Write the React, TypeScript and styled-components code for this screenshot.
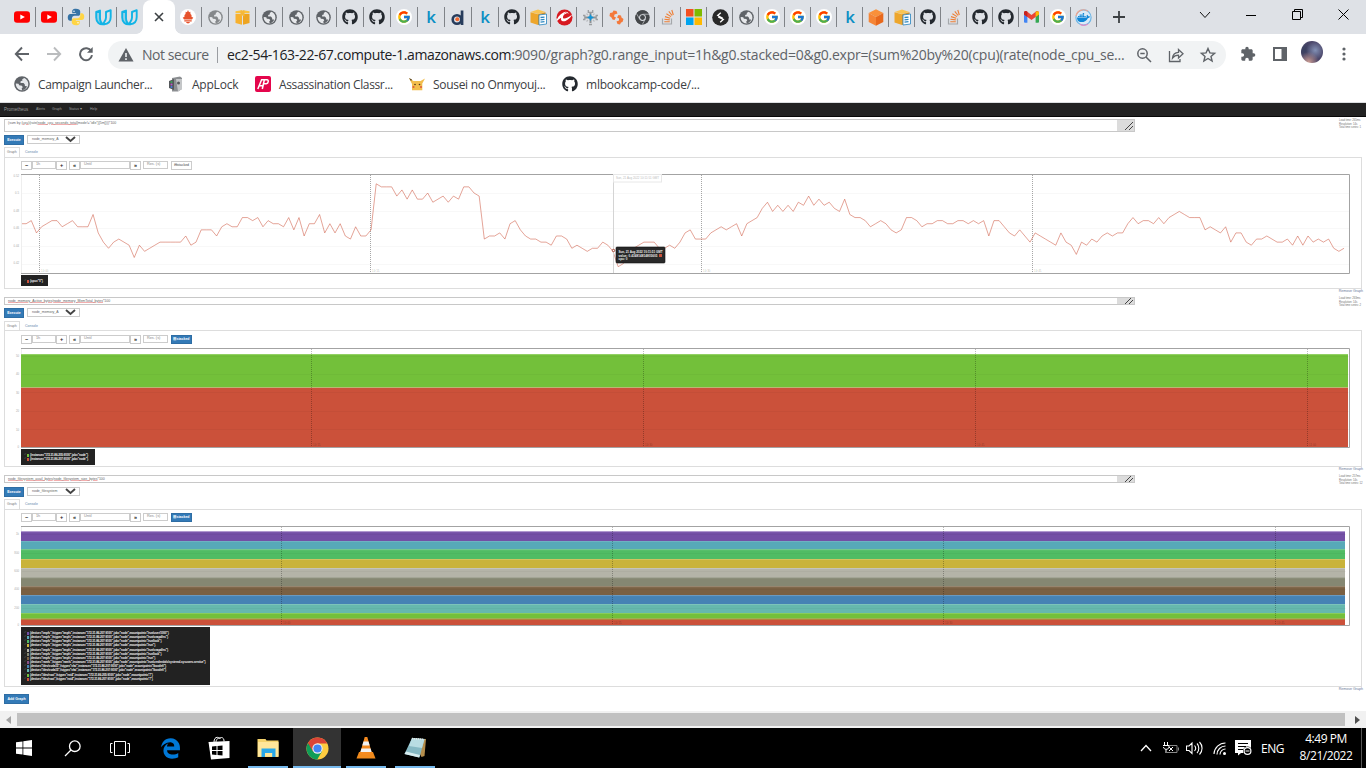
import React from "react";
import styled, { createGlobalStyle } from "styled-components";
import { FaGithub, FaDocker } from "react-icons/fa";
import { FaEdgeLegacy } from "react-icons/fa6";
import { FcGoogle } from "react-icons/fc";

const Global = createGlobalStyle`
  *, *::before, *::after { box-sizing: border-box; }
  body { margin: 0; background: #fff; overflow: hidden; }
`;

const UI_FONT = `"Open Sans", "Noto Sans", sans-serif`;
const PAGE_FONT = `"Liberation Sans", Arial, sans-serif`;

/* ---------- window shell ---------- */
const Window = styled.div`
  width: 1366px;
  height: 768px;
  display: flex;
  flex-direction: column;
  overflow: hidden;
  background: #fff;
  font-family: ${UI_FONT};
`;

const TabStrip = styled.div`
  height: 34px;
  flex: none;
  display: flex;
  background: #dee1e6;
  padding-left: 8.5px;
`;

const Tab = styled.div<{ $w: number; $line?: boolean }>`
  width: ${(p) => p.$w}px;
  flex: none;
  display: flex;
  align-items: center;
  justify-content: center;
  position: relative;
  &::after {
    content: "";
    position: absolute;
    right: 0;
    top: 7px;
    width: 1px;
    height: 20px;
    background: ${(p) => (p.$line ? "#808388" : "transparent")};
  }
`;

const ActiveTab = styled.div`
  width: 31.5px;
  flex: none;
  display: flex;
  align-items: center;
  justify-content: center;
  background: #fff;
  border-radius: 8px 8px 0 0;
  position: relative;
  &::before, &::after {
    content: "";
    position: absolute;
    bottom: 0;
    width: 7px;
    height: 7px;
  }
  &::before { left: -7px; background: radial-gradient(circle at 0 0, transparent 6.5px, #fff 7.2px); }
  &::after { right: -7px; background: radial-gradient(circle at 100% 0, transparent 6.5px, #fff 7.2px); }
`;

const NewTab = styled.div`
  width: 45px;
  display: flex;
  align-items: center;
  justify-content: center;
`;

const WindowButtons = styled.div`
  margin-left: auto;
  display: flex;
  height: 29px;
  align-items: center;
`;

const WindowButton = styled.div`
  width: 46px;
  display: flex;
  justify-content: center;
`;

const Letter = styled.span<{ $c: string }>`
  font: 600 17px/18px "Open Sans", sans-serif;
  color: ${(p) => p.$c};
`;

const Disc = styled.span<{ $bg: string }>`
  width: 16px;
  height: 16px;
  border-radius: 50%;
  background: ${(p) => p.$bg};
  display: flex;
  align-items: center;
  justify-content: center;
`;

/* ---------- toolbar ---------- */
const Toolbar = styled.div`
  height: 37px;
  flex: none;
  display: flex;
  align-items: center;
  padding-left: 12px;
`;

const NavButton = styled.div`
  width: 32px;
  height: 30px;
  flex: none;
  margin-top: 2px;
  display: flex;
  align-items: center;
  padding-left: 2px;
`;

const Omnibox = styled.div`
  margin: 4px 0 0 0;
  width: 1118px;
  height: 28px;
  flex: none;
  border-radius: 14px;
  background: #f1f3f4;
  display: flex;
  align-items: center;
  padding: 0 9px 0 10px;
  white-space: nowrap;
  svg { flex: none; }
`;

const NotSecure = styled.span`
  flex: none;
  margin-left: 8px;
  width: 67px;
  font-size: 14px;
  line-height: 20px;
  letter-spacing: -0.43px;
  color: #5f6368;
`;

const Divider = styled.span`
  width: 1px;
  height: 16px;
  flex: none;
  margin: 0 9px 0 8px;
  background: #9a9da1;
`;

const Url = styled.span`
  font-size: 14px;
  line-height: 20px;
  letter-spacing: -0.24px;
  color: #5f6368;
  flex: 1 1 0;
  min-width: 0;
  b { font-weight: 400; color: #202124; letter-spacing: -0.39px; }
`;

const OmniIcons = styled.div`
  flex: none;
  display: flex;
  gap: 14px;
`;

const ToolIcons = styled.div`
  display: flex;
  align-items: center;
  margin-top: 3px;
  padding-left: 7px;
`;

const ToolIcon = styled.div<{ $w: number }>`
  width: ${(p) => p.$w}px;
  flex: none;
  display: flex;
  justify-content: center;
`;

const Avatar = styled.span`
  width: 22px;
  height: 22px;
  margin-top: -4px;
  border-radius: 50%;
  background:
    radial-gradient(circle at 35% 95%, #c79a92 0, transparent 40%),
    radial-gradient(circle at 65% 42%, #8290b4 0, transparent 48%),
    radial-gradient(circle at 15% 40%, #39405f 0, transparent 40%),
    #4a4568;
`;

const Bookmarks = styled.div`
  height: 31px;
  flex: none;
  display: flex;
  padding-left: 14px;
  align-items: center;
`;

const Bookmark = styled.div<{ $w: number; $ls: number }>`
  width: ${(p) => p.$w}px;
  height: 20px;
  margin-top: -5px;
  display: flex;
  align-items: center;
  gap: 8px;
  white-space: nowrap;
  font-size: 12px;
  letter-spacing: ${(p) => p.$ls}px;
  color: #3c4043;
`;

/* ---------- web page, shown at a quarter of its size ---------- */
const Page = styled.div`
  height: 609px;
  flex: none;
  border-top: 1px solid #dcdee1;
  font-family: ${PAGE_FONT};
  font-size: 3.5px;
  color: #333;
`;

const NavBar = styled.div`
  height: 14px;
  margin-bottom: 2px;
  background: #222;
  border-bottom: 1px solid #080808;
  display: flex;
  align-items: center;
  padding-left: 4px;
  color: #9d9d9d;
  line-height: 5px;
`;

const Brand = styled.span`
  width: 32px;
  font-size: 4.5px;
`;

const NavItem = styled.span<{ $w: number }>`
  width: ${(p) => p.$w}px;
`;

const Section = styled.section<{ $h: number }>`
  height: ${(p) => p.$h}px;
  padding: 0 4px;
`;

const QueryRow = styled.div<{ $h: number; $gap: number }>`
  height: ${(p) => p.$h}px;
  margin-bottom: ${(p) => p.$gap}px;
  display: flex;
  justify-content: space-between;
`;

const QueryBox = styled.div`
  width: 1131px;
  height: 100%;
  border: 1px solid #c8c8c8;
  display: flex;
  justify-content: space-between;
  color: #666;
`;

const QueryText = styled.span`
  padding: 1px 0 0 3px;
  line-height: 4px;
  white-space: nowrap;
  u { text-decoration: underline 0.4px #f3aeae; text-underline-offset: 0.2px; }
`;

const Grip = styled.span`
  width: 17px;
  background: #dcdcdc;
  display: flex;
  align-items: center;
  justify-content: flex-end;
  padding-right: 1px;
`;

const Stats = styled.div`
  width: 24px;
  height: 12px;
  margin-right: -1px;
  font-size: 2.8px;
  line-height: 3.6px;
  letter-spacing: -0.06px;
  color: #777;
  white-space: nowrap;
`;

const ExecRow = styled.div`
  display: flex;
  gap: 3px;
  height: 10px;
`;

const PrimaryButton = styled.button<{ $w: number; $h?: number; $ml?: number }>`
  width: ${(p) => p.$w}px;
  height: ${(p) => p.$h ?? 10}px;
  margin: 0 0 0 ${(p) => p.$ml ?? 0}px;
  padding: 0 0 1px;
  border: 1px solid #2e6da4;
  background: #337ab7;
  color: #fff;
  display: flex;
  align-items: center;
  justify-content: center;
  font: 700 3.5px/4px ${PAGE_FONT};
  white-space: nowrap;
`;

const Select = styled.div`
  width: 53px;
  height: 9px;
  border: 1px solid #ccc;
  display: flex;
  align-items: center;
  justify-content: space-between;
  padding: 0 3px 0 4px;
  line-height: 5px;
  color: #666;
  white-space: nowrap;
`;

const TabsRow = styled.div<{ $gap: number }>`
  margin-top: ${(p) => p.$gap}px;
  height: ${(p) => 12 - p.$gap}px;
  display: flex;
  line-height: 8px;
`;

const PageTab = styled.span<{ $active?: boolean }>`
  width: ${(p) => (p.$active ? 16 : 24)}px;
  padding-left: ${(p) => (p.$active ? 2 : 5)}px;
  padding-top: ${(p) => (p.$active ? 0 : 1)}px;
  border: ${(p) => (p.$active ? "1px solid #ddd" : "0")};
  border-bottom: 0;
  color: ${(p) => (p.$active ? "#777" : "#5f88ad")};
`;

const Panel = styled.div<{ $h: number; $pad: number }>`
  height: ${(p) => p.$h}px;
  border: 1px solid #ddd;
  padding: ${(p) => p.$pad}px 11px 0 5px;
`;

const Controls = styled.div`
  height: 9px;
  margin: 0 0 4px 11px;
  display: flex;
`;

const Field = styled.span<{ $w: number; $btn?: boolean; $ml?: number; $short?: boolean }>`
  width: ${(p) => p.$w}px;
  height: ${(p) => (p.$short ? 8 : 9)}px;
  margin-left: ${(p) => p.$ml ?? 0}px;
  border: 1px solid #ccc;
  line-height: ${(p) => (p.$btn ? 7 : 5.5)}px;
  padding-left: ${(p) => (p.$btn ? 0 : 3)}px;
  text-align: ${(p) => (p.$btn ? "center" : "left")};
  font-weight: ${(p) => (p.$btn ? 700 : 400)};
  font-size: ${(p) => (p.$btn ? 5.5 : 3.8)}px;
  color: ${(p) => (p.$btn ? "#222" : "#888")};
`;

const StackButton = styled.span`
  width: 21px;
  height: 9px;
  margin-left: 3px;
  border: 1px solid #ccc;
  line-height: 7px;
  text-align: center;
  color: #444;
`;

const Legend = styled.div<{ $w: number; $h: number; $pad: number }>`
  width: ${(p) => p.$w}px;
  height: ${(p) => p.$h}px;
  margin: 1px 0 0 11px;
  background: #222;
  padding: ${(p) => p.$pad}px 0 0 3px;
`;

const LegendRow = styled.div<{ $gap?: boolean }>`
  height: 4px;
  margin-top: ${(p) => (p.$gap ? 1 : 0)}px;
  display: flex;
  align-items: center;
  white-space: nowrap;
  color: #f4f4f4;
  font: 700 3px/4px ${PAGE_FONT};
  letter-spacing: -0.12px;
`;

const Check = styled.span`
  width: 3px;
  color: #4c4c4c;
  font-size: 2.5px;
`;

const Swatch = styled.span<{ $c: string }>`
  width: 2px;
  height: 3px;
  margin-right: 1px;
  background: ${(p) => p.$c};
`;

const RemoveLink = styled.div`
  height: 5px;
  margin-right: -1px;
  text-align: right;
  font-size: 3.6px;
  line-height: 4px;
  color: #66799a;
`;

const AddRow = styled.div`
  padding-left: 4px;
`;

/* ---------- scroll bar and task bar ---------- */
const ScrollBar = styled.div`
  height: 17px;
  flex: none;
  background: #f1f1f1;
  display: flex;
  align-items: center;
`;

const ScrollArrow = styled.span<{ $w: number }>`
  width: ${(p) => p.$w}px;
  flex: none;
  display: flex;
  justify-content: center;
`;

const Thumb = styled.span`
  width: 1328px;
  height: 13px;
  flex: none;
  background: #c1c1c1;
`;

const TaskBar = styled.div`
  height: 40px;
  flex: none;
  background: #000;
  display: flex;
  color: #fff;
`;

const TaskItem = styled.div<{ $w: number; $active?: boolean; $line?: number }>`
  width: ${(p) => p.$w}px;
  height: 40px;
  display: flex;
  align-items: center;
  justify-content: center;
  background:
    linear-gradient(#76b9ed, #76b9ed) center bottom / ${(p) => p.$line ?? 0}px 2px no-repeat,
    ${(p) => (p.$active ? "#333" : "transparent")};
`;

const Tray = styled.div`
  margin-left: auto;
  display: flex;
  align-items: center;
  font-size: 12px;
`;

const TrayIcon = styled.span<{ $w: number }>`
  width: ${(p) => p.$w}px;
  display: flex;
  justify-content: center;
`;

const Lang = styled.span`
  width: 36px;
  padding-right: 1px;
  text-align: center;
  letter-spacing: -0.4px;
`;

const Clock = styled.span`
  width: 70px;
  height: 36px;
  text-align: center;
  line-height: 17px;
  letter-spacing: -0.45px;
`;

const Peek = styled.span`
  width: 5px;
  height: 40px;
  border-left: 1px solid #555;
`;

/* ---------- favicons ---------- */
const YouTube = () => (
  <svg width="16" height="16" viewBox="0 0 16 16">
    <rect x="0" y="2.3" width="16" height="11.4" rx="3" fill="#f00" />
    <path d="M6.3 5.4v5.2L10.9 8z" fill="#fff" />
  </svg>
);

const Python = () => (
  <svg width="18" height="18" viewBox="0 0 24 24">
    <path d="M11.9 1C7.5 1 7 3 7 4.600V7h5.200v1H4.500C2.300 8 1 9.900 1 12.500S2.200 17 4.300 17H6.500v-3c0-2 1.600-3.600 3.600-3.600h4.800c1.600 0 2.700-1.200 2.700-2.800V4.600C17.600 2.400 15.400 1 11.900 1z" fill="#3673a5" />
    <path d="M12.100 23c4.400 0 4.900-2 4.900-3.600V17h-5.200v-1h7.700c2.200 0 3.500-1.900 3.500-4.500S21.800 7 19.700 7h-2v3c0 2-1.800 3.600-3.700 3.600H9.200c-1.600 0-2.800 1.200-2.800 2.800v3C6.400 21.600 8.600 23 12.100 23z" fill="#ffd544" />
    <circle cx="9.300" cy="4.200" r="1" fill="#fff" />
    <circle cx="14.700" cy="19.800" r="1" fill="#fff" />
  </svg>
);

const Udacity = () => (
  <svg width="17" height="17" viewBox="0 0 17 17" stroke="#12b4e6" strokeLinejoin="round">
    <path d="M1.200 3 5 1.600V9c0 3.200 1.300 5.600 4 6.200C4.500 16 1.200 13.500 1.200 8.500z" fill="#12b4e6" fillOpacity=".35" strokeWidth="1.900" />
    <path d="M11 3 15.700 1.200V8c0 4.200-2.500 7-6.700 7.200C7.800 13.700 11 12 11 8.500z" fill="none" strokeWidth="1.900" />
  </svg>
);

const Globe = ({ c = "#5f6368", s = 15 }: { c?: string; s?: number }) => (
  <svg width={s} height={s} viewBox="0 0 16 16">
    <circle cx="8" cy="8" r="7.8" fill={c} />
    <path d="M10.300 1.900 8.200 3.200 8.500 4.600 6.600 5.300 6.500 6.900 9.500 7 10.800 8.400 10.900 10 13 10.200C12.300 12.500 10.500 14 8.200 14.200L7.700 12.300 8.800 11.300 7.900 9.700 5.200 9.300 4.500 7.800 1.800 7.400C1.600 11 4.500 14.300 8 14.300 11.500 14.300 14.300 11.500 14.300 8 14.300 5.200 12.600 2.900 10.300 1.900z" fill="#e6e8eb" />
  </svg>
);

const Prometheus = () => (
  <Disc $bg="#fff">
    <svg width="12" height="14" viewBox="0 0 12 14" fill="#e6522c">
      <path d="M6 0 7 2.300 8.300 1.800 8.500 4 9.500 5 9.600 7 11.300 7.500 10 9.600H2L.7 7.500 2.400 7 2.500 5 3.500 4 3.700 1.800 5 2.300z" />
      <path d="M2.300 10.200h7.400v1.200H2.300zM4 12h4c-.4 1.900-3.600 1.900-4 0z" />
    </svg>
  </Disc>
);

const Cube = ({ a, b, c }: { a: string; b: string; c: string }) => (
  <svg width="16" height="17" viewBox="0 0 16 17">
    <path d="M8 .3 15.300 4 8 8 .7 4z" fill={a} />
    <path d="M.7 4 8 8V16.700L.7 13z" fill={b} />
    <path d="M15.300 4 8 8V16.700l7.300-3.700z" fill={c} />
  </svg>
);

const AwsBox = () => (
  <svg width="15" height="15" viewBox="0 0 15 15">
    <path d="M.5 1.200 7 .3v2.900L.5 3.200zM8 .3l6.500.9v2L8 3.200z" fill="#fbc33c" />
    <path d="M.5 4H7v10.700L.5 13z" fill="#f7b12f" />
    <path d="M8 4h6.500v9L8 14.700z" fill="#eda421" />
    <path d="M5.500.5h4v6l-2-1-2 1z" fill="#f5b83b" />
  </svg>
);

const BoxDoc = () => (
  <svg width="17" height="17" viewBox="0 0 17 17">
    <path d="M.5 3 8 .5 15.500 3 8 5z" fill="#f9c453" />
    <path d="M.5 3.300 8 5.300V16L.5 13.500z" fill="#eda62c" />
    <path d="M15.500 3.300 8 5.300V16l7.500-2.500z" fill="#d98f1c" />
    <path d="M9 6l7.500-1v10L9 16z" fill="#fff" stroke="#3b8fc4" strokeWidth=".9" />
    <path d="M10.500 8.500l4-.4M10.500 10.800l4-.4M10.500 13.100l4-.4" stroke="#2f88c0" strokeWidth="1.300" />
  </svg>
);

const LetterD = () => (
  <svg width="14" height="17" viewBox="0 0 14 17">
    <circle cx="6" cy="10.500" r="4.300" fill="none" stroke="#273c5c" strokeWidth="2.600" />
    <path d="M9.700 1.500h2.700V16H9.700z" fill="#273c5c" />
    <circle cx="6.300" cy="10.300" r="2" fill="#f0672f" />
  </svg>
);

const Trend = () => (
  <svg width="17" height="17" viewBox="0 0 17 17">
    <circle cx="8.500" cy="8.500" r="8" fill="#d71920" />
    <path d="M.8 10.500C3 6 6 3.500 10.500 2.500 8 5 6.500 7.500 7 9c1 1.300 4.500.2 9.300-3.500-2.800 4.800-6.800 7.300-9.600 6.800C5 11.800 4.800 10.500 5.200 8.800 3.500 9.600 2.200 10.600 1.300 12z" fill="#fff" />
    <path d="M8.600 5.200C10.500 3.200 12 3.300 12.300 4.300" stroke="#fff" strokeWidth="1" fill="none" />
  </svg>
);

const Hub = () => (
  <svg width="17" height="17" viewBox="0 0 17 17">
    <path d="M8.500 3v4M8.500 10v4M3 8.500h4M10 8.500h4" stroke="#8e9194" strokeWidth="2" />
    <path d="M6.300 1v2.300h4.400V1M1 6.500h1.800v4H1M16 6.500h-1.800v4H16M7 15.500h3" stroke="#9b9ea1" strokeWidth="1.300" fill="none" />
    <path d="M4.500 4.500 6 6M12.500 4.500 11 6M4.500 12.500 6 11M12.500 12.500 11 11" stroke="#babdc0" strokeWidth="1.200" />
    <path d="M8.500 5 9.700 7.300 12 8.500 9.700 9.700 8.500 12 7.300 9.700 5 8.500 7.300 7.300z" fill="#1593d3" />
  </svg>
);

const Brackets = () => (
  <svg width="17" height="17" viewBox="0 0 17 17" fill="#f4793b">
    <path d="M2 4 4.500 3.500 5.500 1.500 8.500 2 9.500 4.500 6.500 5.500 6 7.500 8 8.500 6.500 11 4.500 10.500 3.500 8.500 1.500 7z" />
    <path d="M8.500 12.500 11 11.500 11 9.500 9 8.500 10.500 6 13 6.500 13.500 8.500 15.500 10 14.500 13 13 13.500 12 15.500 9.500 15z" />
  </svg>
);

const ChromeMark = ({ color = false, s = 15 }: { color?: boolean; s?: number }) => {
  const [r, y, g] = color ? ["#db4437", "#ffcd40", "#0f9d58"] : ["#44474a", "#44474a", "#44474a"];
  return (
    <svg width={s} height={s} viewBox="0 0 48 48">
      <circle cx="24" cy="24" r="23" fill={y} />
      <path d="M24 24 4.100 12.500A23 23 0 0 0 23.500 47L33.500 29.500z" fill={g} />
      <path d="M24 24V13.500H44.500A23 23 0 0 0 4.100 12.500L14.500 30z" fill={r} />
      {!color && <path d="M24 13.500H45M14.900 29.200 4.400 11M33.100 29.200 23 47" stroke="#dee1e6" strokeWidth="2" />}
      <circle cx="24" cy="24" r="10.800" fill={color ? "#f1f1f1" : "#dee1e6"} />
      <circle cx="24" cy="24" r={color ? 8.5 : 7.8} fill={color ? "#4285f4" : "#44474a"} />
    </svg>
  );
};

const Microsoft = () => (
  <svg width="16" height="16" viewBox="0 0 16 16">
    <path d="M0 0h7.500v7.500H0z" fill="#f25022" />
    <path d="M8.500 0H16v7.500H8.500z" fill="#7fba00" />
    <path d="M0 8.500h7.500V16H0z" fill="#00a4ef" />
    <path d="M8.500 8.500H16V16H8.500z" fill="#ffb900" />
  </svg>
);

const DarkKnot = () => (
  <svg width="17" height="17" viewBox="0 0 17 17">
    <circle cx="8.500" cy="8.500" r="8.300" fill="#292929" />
    <path d="M8.800 3.800 5.700 6.500 10.800 9.300M6.200 8 11.300 10.500 8.200 13.200" stroke="#fff" strokeWidth="1.300" fill="none" />
  </svg>
);

const Gmail = () => (
  <svg width="15" height="12" viewBox="0 0 15 12">
    <path d="M0 2h3.400v9.700H1A1 1 0 0 1 0 10.700z" fill="#4285f4" />
    <path d="M11.600 2H15v8.700a1 1 0 0 1-1 1h-2.400z" fill="#34a853" />
    <path d="M0 1.800C0 .2 1.800-.4 3 .5l4.500 3.400L12 .5c1.200-.9 3-.3 3 1.300v1.700L7.500 9 0 3.500z" fill="#ea4335" />
    <path d="M11.600.8C13-.4 15 .2 15 1.800v1.700L11.600 6z" fill="#fbbc04" />
    <path d="M0 1.800C0 .6 1-.1 2 .1L3.400.8V6L0 3.500z" fill="#c5221f" />
  </svg>
);

const Docker = () => (
  <svg width="17" height="17" viewBox="0 0 17 17">
    <circle cx="8.500" cy="8.500" r="7.600" fill="#dcebf7" stroke="#6fb6e6" strokeWidth="1.200" />
    <path d="M1 7A7.600 7.600 0 0 1 13 2.300" stroke="#f4a58c" strokeWidth="1.200" fill="none" />
    <path d="M13 15A7.600 7.600 0 0 1 5 15.200" stroke="#e48cc6" strokeWidth="1.200" fill="none" />
    <FaDocker x="2" y="2" width="13" height="13" size={13} color="#0f86d6" />
  </svg>
);

const GithubIcon = () => <FaGithub size={16} color="#24292f" />;

const GoogleIcon = () => (
  <Disc $bg="#fff">
    <FcGoogle size={14} />
  </Disc>
);

const StackIcon = () => (
  <svg width="14" height="16" viewBox="0 0 14 16" fill="none">
    <path d="M1.500 9.500V15h9V9.500" stroke="#a5a8ab" strokeWidth="1.200" />
    <path d="M3.300 12.700h5.500M3.400 10.300l5.400.6M4 7.600l5.200 1.600M5.400 4.700l4.600 2.900M7.800 2.300l3.300 4.200M10.800 1l1.500 5" stroke="#ee7f35" strokeWidth="1.100" />
  </svg>
);

const wideTabs: React.ReactNode[] = [
  <Prometheus />, <Globe c="#85888b" />, <AwsBox />, <Globe />, <Globe />, <Globe />,
  <GithubIcon />, <GithubIcon />, <GoogleIcon />, <Letter $c="#0b8fc4">k</Letter>, <LetterD />,
  <Letter $c="#0b8fc4">k</Letter>, <GithubIcon />,
];

const narrowTabs: React.ReactNode[] = [
  <BoxDoc />, <Trend />, <Hub />, <Brackets />, <ChromeMark />, <StackIcon />, <Microsoft />, <DarkKnot />,
  <Globe />, <GoogleIcon />, <GoogleIcon />, <GoogleIcon />, <Letter $c="#0b8fc4">k</Letter>,
  <Cube a="#f9903a" b="#f58536" c="#e8681c" />, <BoxDoc />, <GithubIcon />, <StackIcon />, <GithubIcon />,
  <GithubIcon />, <Gmail />, <GoogleIcon />, <Docker />,
];

const Tabs = () => (
  <TabStrip>
    <Tab $w={27} $line><YouTube /></Tab>
    <Tab $w={27} $line><YouTube /></Tab>
    <Tab $w={27} $line><Python /></Tab>
    <Tab $w={27} $line><Udacity /></Tab>
    <Tab $w={26.5}><Udacity /></Tab>
    <ActiveTab>
      <svg width="10" height="10" viewBox="0 0 10 10">
        <path d="M1 1l8 8M9 1 1 9" stroke="#3c4043" strokeWidth="1.600" />
      </svg>
    </ActiveTab>
    {wideTabs.map((icon, i) => <Tab key={i} $w={27} $line>{icon}</Tab>)}
    {narrowTabs.map((icon, i) => <Tab key={i} $w={25.97} $line>{icon}</Tab>)}
    <NewTab>
      <svg width="12" height="12" viewBox="0 0 12 12"><path d="M6 0v12M0 6h12" stroke="#3c4043" strokeWidth="1.800" /></svg>
    </NewTab>
    <WindowButtons>
      <WindowButton>
        <svg width="12" height="8" viewBox="0 0 12 8"><path d="M1 1l5 5.500L11 1" stroke="#111" fill="none" /></svg>
      </WindowButton>
      <WindowButton>
        <svg width="10" height="10" viewBox="0 0 10 10"><path d="M0 5.500h10" stroke="#000" /></svg>
      </WindowButton>
      <WindowButton>
        <svg width="11" height="11" viewBox="0 0 11 11" fill="none" stroke="#000">
          <path d="M.5 2.500h8v8h-8zM2.500 2.500v-2h8v8h-2" />
        </svg>
      </WindowButton>
      <WindowButton>
        <svg width="11" height="11" viewBox="0 0 11 11"><path d="M.5.5l10 10M10.500.5l-10 10" stroke="#000" /></svg>
      </WindowButton>
    </WindowButtons>
  </TabStrip>
);

const AddressBar = () => (
  <Toolbar>
    <NavButton>
      <svg width="16" height="16" viewBox="0 0 16 16" fill="none" stroke="#5f6368" strokeWidth="1.900"><path d="M15 8H2M8 1.500 1.800 8 8 14.500" /></svg>
    </NavButton>
    <NavButton>
      <svg width="16" height="16" viewBox="0 0 16 16" fill="none" stroke="#babcbe" strokeWidth="1.900"><path d="M1 8h13M8 1.500 14.200 8 8 14.500" /></svg>
    </NavButton>
    <NavButton>
      <svg width="16" height="16" viewBox="0 0 16 16" fill="none" stroke="#5f6368" strokeWidth="2">
        <path d="M13.300 5.200A6 6 0 1 0 14 9.200" />
        <path d="M14.700 1v5.700H9z" fill="#5f6368" stroke="none" />
      </svg>
    </NavButton>
    <Omnibox>
      <svg width="16" height="14" viewBox="0 0 16 14">
        <path d="M8 0l7.500 13.500H.5z" fill="#5f6368" />
        <path d="M8 5v4M8 10.300v1.700" stroke="#f1f3f4" strokeWidth="1.600" />
      </svg>
      <NotSecure>Not secure</NotSecure>
      <Divider />
      <Url>
        <b>ec2-54-163-22-67.compute-1.amazonaws.com</b>
        :9090/graph?g0.range_input=1h&amp;g0.stacked=0&amp;g0.expr=(sum%20by%20(cpu)(rate(node_cpu_se...
      </Url>
      <OmniIcons>
        <svg width="18" height="18" viewBox="0 0 18 18" fill="none" stroke="#5f6368" strokeWidth="1.500">
          <circle cx="7.500" cy="7.500" r="4.700" />
          <path d="M11 11l5 5M5.300 7.500h4.400" />
        </svg>
        <svg width="18" height="18" viewBox="0 0 18 18" fill="none" stroke="#5f6368" strokeWidth="1.300">
          <path d="M2.500 5v10.500h10.500V13" />
          <path d="M5.500 12c.3-3.700 2.500-5.500 6-5.700V3.500L16 7.700l-4.500 4.200V9.200C8.800 9.200 7 10 5.500 12z" />
        </svg>
        <svg width="18" height="18" viewBox="0 0 18 18" fill="none" stroke="#5f6368" strokeWidth="1.400">
          <path d="M9 2.500l1.900 4.400 4.700.4-3.600 3.100 1.100 4.600L9 12.500 4.900 15 6 10.400 2.400 7.300l4.700-.4z" />
        </svg>
      </OmniIcons>
    </Omnibox>
    <ToolIcons>
      <ToolIcon $w={29}>
        <svg width="16" height="16" viewBox="0 0 24 24" fill="#5f6368">
          <path d="M20.500 11H19V7c0-1.100-.9-2-2-2h-4V3.500a2.500 2.500 0 0 0-5 0V5H4c-1.100 0-2 .9-2 2v3.800h1.500a2.700 2.700 0 0 1 0 5.400H2V20c0 1.100.9 2 2 2h3.800v-1.500a2.700 2.700 0 0 1 5.400 0V22H17c1.100 0 2-.9 2-2v-4h1.500a2.500 2.500 0 0 0 0-5z" />
        </svg>
      </ToolIcon>
      <ToolIcon $w={35}>
        <svg width="14" height="14" viewBox="0 0 14 14"><path d="M1 1h12v12H1z" fill="none" stroke="#5f6368" strokeWidth="2" /><path d="M8.500 1H13v12H8.500z" fill="#5f6368" /></svg>
      </ToolIcon>
      <ToolIcon $w={30}><Avatar /></ToolIcon>
      <ToolIcon $w={34}>
        <svg width="4" height="14" viewBox="0 0 4 14" fill="#5f6368"><circle cx="2" cy="2" r="1.600" /><circle cx="2" cy="7" r="1.600" /><circle cx="2" cy="12" r="1.600" /></svg>
      </ToolIcon>
    </ToolIcons>
  </Toolbar>
);

const BookmarkBar = () => (
  <Bookmarks>
    <Bookmark $w={154} $ls={-0.34}><Globe s={16} />Campaign Launcher...</Bookmark>
    <Bookmark $w={87} $ls={-0.22}>
      <svg width="16" height="16" viewBox="0 0 16 16">
        <path d="M4 2l8-1.500L14 2v11l-4 2.500H4z" fill="#8b8e91" />
        <path d="M8 3h6v10l-4 2.500z" fill="#c4c6c8" />
        <path d="M1 5l5-2v11l-5-2z" fill="#55585b" />
        <circle cx="3.500" cy="6" r="1" fill="#3aa75a" /><circle cx="3.500" cy="8.500" r="1" fill="#c352c9" /><circle cx="3.500" cy="11" r="1" fill="#3f7fe0" />
        <circle cx="10.500" cy="7" r="1.500" fill="#55585b" />
      </svg>
      AppLock
    </Bookmark>
    <Bookmark $w={154} $ls={-0.37}>
      <svg width="16" height="16" viewBox="0 0 16 16">
        <rect width="16" height="16" rx="2" fill="#e4064c" />
        <path d="M2.800 13 6.600 3.700H12c2 0 1.500 4-.7 4H8.500M4.500 9.700h3.200M9.300 4 7.300 13" stroke="#fff" strokeWidth="1.500" fill="none" />
      </svg>
      Assassination Classr...
    </Bookmark>
    <Bookmark $w={153} $ls={-0.3}>
      <svg width="16" height="16" viewBox="0 0 16 16">
        <path d="M0 2l4.500 3h7L16 2.500 13.300 7.500v6.800H3V8z" fill="#f2bd4c" />
        <path d="M0 2l3 1.500L2 5z" fill="#5b4522" />
        <circle cx="6" cy="8.500" r=".8" fill="#4b351a" /><circle cx="10.500" cy="8.500" r=".8" fill="#4b351a" />
        <circle cx="4.500" cy="11" r="1.100" fill="#df5d3a" /><circle cx="12" cy="11" r="1.100" fill="#df5d3a" />
      </svg>
      Sousei no Onmyouj...
    </Bookmark>
    <Bookmark $w={150} $ls={-0.22}><FaGithub size={16} color="#24292f" />mlbookcamp-code/...</Bookmark>
  </Bookmarks>
);

/* ---------- charts ---------- */
const CPU_LEVELS = [
  3,3,2,6,4,3,2,2,4,3,2,4,4,4,0,6,9,11,9,8,9,10,14,10,12,11,10,9,9,9,9,9,7,10,9,5,5,5,7,4,3,4,4,
  1,1,2,1,4,2,3,3,4,1,5,1,7,3,3,0,6,3,6,3,7,8,4,7,7,5,-10,-9,-9,-9,-6,-8,-5,-8,-5,-5,-7,-4,-5,-6,-4,-6,-5,
  -9,-9,-7,-6,8,7,7,6,8,3,2,5,7,8,8,9,9,10,7,7,8,11,10,11,12,11,11,9,10,12,17,16,14,11,10,9,9,9,11,11,10,11,
  9,6,5,8,8,8,6,5,4,5,4,3,7,3,2,1,-2,-4,-1,-3,-1,-3,-1,-4,-3,-6,-3,-5,-3,-4,-2,-1,-5,0,1,1,2,4,3,2,3,5,6,5,
  1,1,2,4,3,3,2,2,3,3,2,2,3,2,3,2,7,2,2,4,6,7,5,7,9,6,7,8,9,10,6,9,10,13,9,10,8,9,7,6,7,6,6,3,1,3,2,2,3,1,3,
  1,0,-1,0,1,1,1,5,4,5,6,4,9,6,6,9,10,8,8,7,8,9,9,8,10,7,10,7,9,8,9,8,11,12,11,
];

type Band = { from: number; to: number; c: string; light: string };

const ChartSvg = styled.svg`
  display: block;
  width: 1345px;
  height: 100px;
  font-family: ${PAGE_FONT};
  overflow: visible;
`;

const X0 = 11;

const Frame = () => (
  <>
    <path d="M11.500 0v99" stroke="#eee" />
    <path d="M11 .5h1328.500v99H11" fill="none" stroke="#a3a3a3" />
  </>
);

const YLabels = ({ at }: { at: [number, string][] }) => (
  <>
    {at.map(([y, t]) => (
      <text key={t + y} x="9" y={y + 1} fontSize="2.800" textAnchor="end" fill="#aaa">{t}</text>
    ))}
  </>
);

const TimeLines = ({ at, labels, dark = 0.35 }: { at: number[]; labels: string[]; dark?: number }) => (
  <>
    {at.map((x, i) => (
      <g key={x}>
        <path d={`M${x + 0.5} 1v98`} stroke="#000" strokeOpacity={dark} strokeDasharray="1 1" />
        <text x={x + 2} y="97.500" fontSize="3" fill="#000" fillOpacity=".3">{labels[i]}</text>
      </g>
    ))}
  </>
);

const CpuChart = () => (
  <ChartSvg viewBox="0 0 1345 100">
    {[19.5, 37.5, 54.5, 72.5, 90.5].map((y) => <path key={y} d={`M12 ${y}h1327`} stroke="#f8f8f8" />)}
    <TimeLines at={[29, 360, 691, 1022]} labels={["10:00", "10:15", "10:30", "10:45"]} />
    <polyline
      points={CPU_LEVELS.map((v, i) => `${(X0 + i * 5.148).toFixed(2)},${(40.5 + v * 3.07).toFixed(2)}`).join(" ")}
      fill="none"
      stroke="#cb513a"
      strokeOpacity=".52"
      strokeWidth="1"
    />
    <Frame />
    <YLabels at={[[1.5, "0.52"], [19, "0.5"], [36.5, "0.48"], [54, "0.46"], [72, "0.44"], [89, "0.42"]]} />
    <path d="M603.500 0v99" stroke="#d4d4d4" />
    <rect x="603.500" y=".5" width="48" height="7.500" fill="#fff" stroke="#e8e8e8" />
    <text x="606" y="4.700" fontSize="2.900" textLength="43" fill="#bbb">Sun, 21 Aug 2022 10:11:51 GMT</text>
    <circle cx="603.500" cy="76.500" r="1.200" fill="#fff" stroke="#a04030" />
    <rect x="606" y="73" width="49" height="16" rx="1" fill="#292929" stroke="#111" strokeWidth=".6" />
    <g fill="#eee" fontSize="3" fontWeight="700">
      <text x="608.500" y="78.800" textLength="44">Sun, 21 Aug 2022 10:11:51 GMT</text>
      <text x="608.500" y="82.500" textLength="39">value: 0.434814814805605</text>
      <text x="608.500" y="85.800" textLength="9">cpu: 0</text>
    </g>
    <rect x="649" y="80" width="3" height="3" fill="#cb513a" />
  </ChartSvg>
);

const StackChart = ({ bands, w, times, labels, ticks }: {
  bands: Band[]; w: number; times: number[]; labels: string[]; ticks: [number, string][];
}) => (
  <ChartSvg viewBox="0 0 1345 100">
    <Frame />
    {bands.map((b) => (
      <g key={b.from}>
        <rect x={X0} y={b.from} width={w} height={b.to - b.from} fill={b.c} />
        <rect x={X0} y={b.from} width={w} height=".8" fill={b.light} />
      </g>
    ))}
    {ticks.map(([y]) => <path key={y} d={`M12 ${Math.floor(y) + 0.5}h${w}`} stroke="#000" strokeOpacity=".03" />)}
    <TimeLines at={times} labels={labels} dark={0.27} />
    <path d="M11 99.500h1328" stroke="#a3a3a3" />
    <YLabels at={ticks} />
  </ChartSvg>
);

const MEM_BANDS: Band[] = [
  { from: 6, to: 39, c: "#73c03a", light: "#9ad470" },
  { from: 39, to: 99, c: "#cb513a", light: "#b9cf84" },
];

const FS_BANDS: Band[] = [
  { from: 5.3, to: 15, c: "#734fa5", light: "#b9a3d6" },
  { from: 15, to: 23.5, c: "#57a9b8", light: "#72b6c4" },
  { from: 23.5, to: 33, c: "#50bc64", light: "#6ac57c" },
  { from: 33, to: 42, c: "#c9b33a", light: "#d6c768" },
  { from: 42, to: 51.5, c: "#b4b4a8", light: "#c8c8be" },
  { from: 51.5, to: 60.5, c: "#858772", light: "#9a9c8a" },
  { from: 60.5, to: 69.3, c: "#7a6043", light: "#907a60" },
  { from: 69.3, to: 78, c: "#4682b4", light: "#6899c3" },
  { from: 78, to: 87, c: "#66b8ad", light: "#83c6bd" },
  { from: 87, to: 92.8, c: "#73c03a", light: "#90cf63" },
  { from: 92.8, to: 99, c: "#cb513a", light: "#a5a53c" },
];

/* ---------- query panels ---------- */
const GripMark = ({ h }: { h: number }) => (
  <svg width="9" height={h} viewBox={`0 0 9 ${h}`} fill="none" stroke="#333" strokeWidth=".9">
    <path d={`M1 ${h} L${h + 1} 0M5 ${h} L9 ${h - 4}`} />
  </svg>
);

type GraphProps = {
  height: number; inputH: number; execGap: number; tabGap: number; panelH: number; panelPad: number;
  query: React.ReactNode; stats: string[]; metric: string; stacked?: boolean;
  chart: React.ReactNode; legend: React.ReactNode;
};

const Graph = (p: GraphProps) => (
  <Section $h={p.height}>
    <QueryRow $h={p.inputH} $gap={p.execGap}>
      <QueryBox>
        <QueryText>{p.query}</QueryText>
        <Grip><GripMark h={p.inputH > 10 ? 8 : 6} /></Grip>
      </QueryBox>
      <Stats>{p.stats.map((s) => <div key={s}>{s}</div>)}</Stats>
    </QueryRow>
    <ExecRow>
      <PrimaryButton $w={20}>Execute</PrimaryButton>
      <Select>
        {p.metric}
        <svg width="11" height="7" viewBox="0 0 11 7"><path d="M1 1l4.500 4L10 1" fill="none" stroke="#444" strokeWidth="1.900" /></svg>
      </Select>
    </ExecRow>
    <TabsRow $gap={p.tabGap}>
      <PageTab $active>Graph</PageTab>
      <PageTab>Console</PageTab>
    </TabsRow>
    <Panel $h={p.panelH} $pad={p.panelPad}>
      <Controls>
        <Field $w={11} $btn>−</Field>
        <Field $w={24} $short>1h</Field>
        <Field $w={11} $btn>+</Field>
        <Field $w={11} $btn $ml={2}>«</Field>
        <Field $w={50} $short>Until</Field>
        <Field $w={11} $btn>»</Field>
        <Field $w={25} $ml={2} $short>Res. (s)</Field>
        {p.stacked
          ? <PrimaryButton $w={21} $h={9} $ml={3}>⊞stacked</PrimaryButton>
          : <StackButton>⊟stacked</StackButton>}
      </Controls>
      {p.chart}
      {p.legend}
    </Panel>
    <RemoveLink>Remove Graph</RemoveLink>
  </Section>
);

const fsNames: [string, string, boolean?][] = [
  [`{device="tmpfs",fstype="tmpfs",instance="172.31.86.207:9100",job="node",mountpoint="/run/user/1000"}`, "#734fa5"],
  [`{device="tmpfs",fstype="tmpfs",instance="172.31.86.207:9100",job="node",mountpoint="/run/snapd/ns"}`, "#57a9b8"],
  [`{device="tmpfs",fstype="tmpfs",instance="172.31.86.207:9100",job="node",mountpoint="/run/lock"}`, "#50bc64"],
  [`{device="tmpfs",fstype="tmpfs",instance="172.31.86.207:9100",job="node",mountpoint="/run"}`, "#c9b33a"],
  [`{device="tmpfs",fstype="tmpfs",instance="172.31.86.207:9100",job="node",mountpoint="/run/snapd/ns"}`, "#b4b4a8", true],
  [`{device="tmpfs",fstype="tmpfs",instance="172.31.86.207:9100",job="node",mountpoint="/run/lock"}`, "#858772"],
  [`{device="tmpfs",fstype="tmpfs",instance="172.31.86.207:9100",job="node",mountpoint="/run"}`, "#7a6043"],
  [`{device="ramfs",fstype="ramfs",instance="172.31.86.207:9100",job="node",mountpoint="/run/credentials/systemd-sysusers.service"}`, "#8a4f86"],
  [`{device="/dev/xvda15",fstype="vfat",instance="172.31.86.207:9100",job="node",mountpoint="/boot/efi"}`, "#4682b4"],
  [`{device="/dev/xvda15",fstype="vfat",instance="172.31.86.207:9100",job="node",mountpoint="/boot/efi"}`, "#66b8ad"],
  [`{device="/dev/root",fstype="ext4",instance="172.31.86.205:9100",job="node",mountpoint="/"}`, "#73c03a", true],
  [`{device="/dev/root",fstype="ext4",instance="172.31.86.207:9100",job="node",mountpoint="/"}`, "#cb513a"],
];

const Row = ({ c, t, gap }: { c: string; t: string; gap?: boolean }) => (
  <LegendRow $gap={gap}>
    <Check>✔</Check>
    <Swatch $c={c} />
    {t}
  </LegendRow>
);

const PrometheusPage = () => (
  <Page>
    <NavBar>
      <Brand>Prometheus</Brand>
      <NavItem $w={16}>Alerts</NavItem>
      <NavItem $w={17}>Graph</NavItem>
      <NavItem $w={21}>Status ▾</NavItem>
      <NavItem $w={16}>Help</NavItem>
    </NavBar>
    <Graph
      height={178} inputH={13} execGap={3} tabGap={2} panelH={132} panelPad={3}
      query={<>(sum by (<u>cpu</u>)(rate(<u>node_cpu_seconds_total</u>{"{mode!=\"idle\"}"}[5m])))*100</>}
      stats={["Load time: 265ms", "Resolution: 14s", "Total time series: 1"]}
      metric="node_memory_A"
      chart={<CpuChart />}
      legend={<Legend $w={27} $h={11} $pad={4}><Row c="#cb513a" t={`{cpu="0"}`} /></Legend>}
    />
    <Graph
      height={178} inputH={8} execGap={3} tabGap={3} panelH={137} panelPad={4} stacked
      query={<><u>node_memory_Active_bytes</u>/<u>node_memory_MemTotal_bytes</u>*100</>}
      stats={["Load time: 263ms", "Resolution: 14s", "Total time series: 2"]}
      metric="node_memory_A"
      chart={
        <StackChart
          bands={MEM_BANDS} w={1327} times={[301, 633, 965, 1297]} labels={["10:15", "10:30", "10:45", "11:00"]}
          ticks={[[8, "50"], [26, "40"], [44.5, "30"], [63, "20"], [81.5, "10"], [99, "0"]]}
        />
      }
      legend={
        <Legend $w={74} $h={16} $pad={4}>
          <Row c="#73c03a" t={`{instance="172.31.86.205:9100",job="node"}`} />
          <Row c="#cb513a" t={`{instance="172.31.86.207:9100",job="node"}`} />
        </Legend>
      }
    />
    <Graph
      height={219} inputH={8} execGap={4} tabGap={2} panelH={178} panelPad={3} stacked
      query={<><u>node_filesystem_avail_bytes</u>/<u>node_filesystem_size_bytes</u>*100</>}
      stats={["Load time: 257ms", "Resolution: 14s", "Total time series: 12"]}
      metric="node_filesystem"
      chart={
        <StackChart
          bands={FS_BANDS} w={1324} times={[271, 602, 933, 1265]} labels={["10:00", "10:15", "10:30", "10:45"]}
          ticks={[[8, "1k"], [27, "800"], [45, "600"], [63, "400"], [82, "200"], [99, "0"]]}
        />
      }
      legend={
        <Legend $w={189} $h={58} $pad={4}>
          {fsNames.map(([t, c, gap], i) => <Row key={i} c={c} t={t} gap={gap} />)}
        </Legend>
      }
    />
    <AddRow><PrimaryButton $w={25}>Add Graph</PrimaryButton></AddRow>
  </Page>
);

/* ---------- task bar ---------- */
const Task = () => (
  <TaskBar>
    <TaskItem $w={48}>
      <svg width="16" height="16" viewBox="0 0 16 16" fill="#fff"><path d="M0 2.300 6.500 1.400v6.200H0zM7.300 1.300 16 0v7.600H7.300zM0 8.400h6.500v6.200L0 13.700zM7.300 8.400H16V16l-8.700-1.300z" /></svg>
    </TaskItem>
    <TaskItem $w={48}>
      <svg width="17" height="17" viewBox="0 0 17 17" fill="none" stroke="#fff" strokeWidth="1.300"><circle cx="10.800" cy="6.200" r="5.300" /><path d="M7 10 1 16" /></svg>
    </TaskItem>
    <TaskItem $w={48}>
      <svg width="20" height="15" viewBox="0 0 20 15" fill="none" stroke="#fff"><path d="M4.500.5h11v14h-11zM2.500 2.500h-2v9h2M17.500 2.500h2v9h-2" /></svg>
    </TaskItem>
    <TaskItem $w={52}><FaEdgeLegacy size={21} color="#0078d7" /></TaskItem>
    <TaskItem $w={46}>
      <svg width="22" height="24" viewBox="0 0 22 24">
        <path d="M6 6c0-5 4-6 5.500-3C13 0 16.500 2 16 5.500M8 6c0-2 2-5 4.500-4" fill="none" stroke="#fff" />
        <path d="M.5 6 21.500 5v17L3 23.500z" fill="#fff" />
        <path d="M4 10.500l4.500-.4v4H4zM9.500 10l5-.4v4.500h-5zM4 15h4.500v4L4 18.600zM9.500 15h5v4.500l-5-.4z" fill="#000" />
      </svg>
    </TaskItem>
    <TaskItem $w={51} $line={40}>
      <svg width="22" height="20" viewBox="0 0 22 20">
        <path d="M.5 1h8l1 1.500h12V19H.5z" fill="#f5d36c" />
        <path d="M1 4h20.500v14.500H1z" fill="#ffe69a" />
        <path d="M4.500 10.500h14V19h-3.300v-4H8v4H4.500z" fill="#29a8e8" />
      </svg>
    </TaskItem>
    <TaskItem $w={48} $active $line={48}><ChromeMark color s={23} /></TaskItem>
    <TaskItem $w={50} $line={40}>
      <svg width="20" height="22" viewBox="0 0 20 22">
        <path d="M3 15h14l2.500 6.500H.5z" fill="#f08a1c" />
        <path d="M8.700 0h2.600L16 16.500c-1.500 2-10.500 2-12 0z" fill="#f58a1f" />
        <path d="M7.500 4.500h5l1.200 4H6.300zM5.400 11.500h9.200l1 3.500H4.400z" fill="#f2f2f2" />
      </svg>
    </TaskItem>
    <TaskItem $w={48} $line={40}>
      <svg width="23" height="22" viewBox="0 0 23 22">
        <path d="M8 1.500l14 .5-1.500 17-3 1z" fill="#b48d4c" />
        <path d="M8 1 20.500 2 15.500 20.500.5 17z" fill="#86b9c4" />
        <path d="M8 1 20.500 2 18 11 5 9z" fill="#b9dde3" />
        <path d="M2 14.500l14 3.500-1 2.500L.5 17z" fill="#d8edf0" />
        <path d="M8 1.500l12 1" stroke="#e8e8e8" strokeDasharray="1 1" strokeWidth="1.500" />
      </svg>
    </TaskItem>
    <Tray>
      <TrayIcon $w={24}>
        <svg width="12" height="8" viewBox="0 0 12 8" fill="none" stroke="#fff" strokeWidth="1.300"><path d="M1 7l5-5.500L11 7" /></svg>
      </TrayIcon>
      <TrayIcon $w={24}>
        <svg width="17" height="12" viewBox="0 0 17 12" fill="none" stroke="#fff"><path d="M2.500 0v3M5.500 0v3M1 3.500h6v1.500c0 3-5.500 3-5.500 0M4 7v4" /><path d="M7 3.500h8v7H5M16.500 5.500v3" stroke="#888" /><path d="M7 5l4 4M11 5 7 9" /></svg>
      </TrayIcon>
      <TrayIcon $w={25}>
        <svg width="17" height="14" viewBox="0 0 17 14" fill="none" stroke="#fff" strokeWidth="1.100"><path d="M.5 5h2.500L6 2v10.500L3 9.500H.5zM8.500 4.500c1.300 1.500 1.300 4 0 5.500M11 2.500c2.400 2.500 2.400 7 0 9.500M13.500 1c3.400 3.500 3.400 9 0 12.500" /></svg>
      </TrayIcon>
      <TrayIcon $w={24}>
        <svg width="13" height="13" viewBox="0 0 13 13" fill="none" stroke="#fff" strokeWidth="1.100"><path d="M1 12A11.500 11.500 0 0 1 12.500 1M4 12.500A8.500 8.500 0 0 1 12.500 4M7 12.500A5.500 5.500 0 0 1 12.500 7" /><circle cx="11.500" cy="11.500" r="1.500" fill="#fff" stroke="none" /></svg>
      </TrayIcon>
      <TrayIcon $w={24}>
        <svg width="17" height="16" viewBox="0 0 17 16"><path d="M0 0h16v13H6l-3 2.500V13H0z" fill="#fff" /><path d="M3 3.500h10M3 6.500h8M3 9.500h5" stroke="#000" /><circle cx="12.500" cy="11" r="4.500" fill="#000" /><circle cx="12.500" cy="11" r="3.400" fill="none" stroke="#fff" strokeWidth="1.200" /><path d="M10.500 11h4" stroke="#fff" /></svg>
      </TrayIcon>
      <Lang>ENG</Lang>
      <Clock>4:49 PM<br />8/21/2022</Clock>
      <Peek />
    </Tray>
  </TaskBar>
);

export default function App() {
  return (
    <Window>
      <Global />
      <Tabs />
      <AddressBar />
      <BookmarkBar />
      <PrometheusPage />
      <ScrollBar>
        <ScrollArrow $w={17}><svg width="5" height="8" viewBox="0 0 5 8"><path d="M5 0v8L0 4z" fill="#a3a3a3" /></svg></ScrollArrow>
        <Thumb />
        <ScrollArrow $w={25}><svg width="5" height="8" viewBox="0 0 5 8"><path d="M0 0v8l5-4z" fill="#505050" /></svg></ScrollArrow>
      </ScrollBar>
      <Task />
    </Window>
  );
}
